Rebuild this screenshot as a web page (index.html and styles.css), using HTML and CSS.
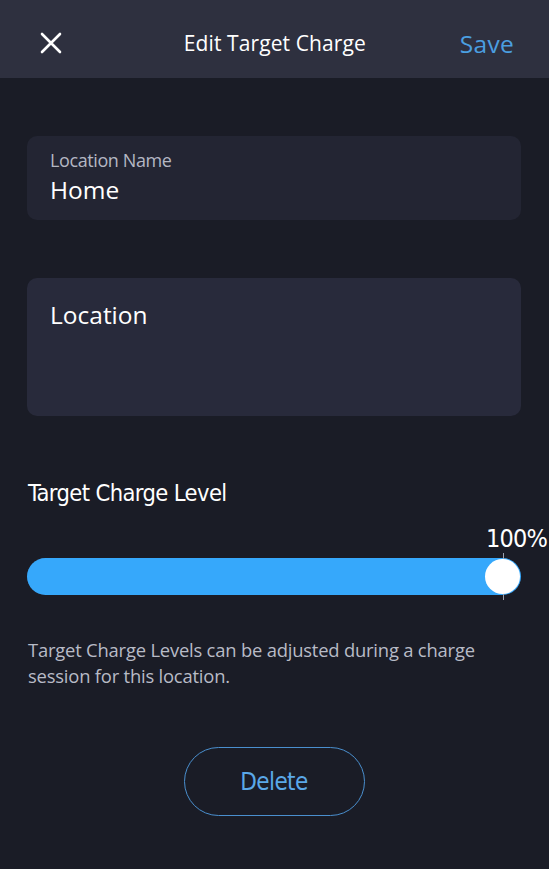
FILE: index.html
```html
<!DOCTYPE html>
<html lang="en">
<head>
  <meta charset="UTF-8">
  <meta name="viewport" content="width=device-width, initial-scale=1.0">
  <title>Edit Target Charge</title>
  <link rel="stylesheet" href="styles.css">
</head>
<body>

<header class="topbar">
  <button class="close-btn" aria-label="Close">
    <svg width="22" height="22" viewBox="0 0 22 22">
      <path d="M2 2 L20 20 M20 2 L2 20" stroke="#fff" stroke-width="2.6" stroke-linecap="round"/>
    </svg>
  </button>
  <div class="title">Edit Target Charge</div>
  <button class="save-btn">Save</button>
</header>

<main class="content">
  <div class="field">
    <div class="field-label">Location Name</div>
    <div class="field-value">Home</div>
  </div>

  <div class="field field-location">
    <div class="field-value">Location</div>
  </div>

  <h2 class="section-title">Target Charge Level</h2>

  <div class="slider">
    <div class="slider-value">100%</div>
    <div class="track">
      <div class="fill" style="width: 100%;"></div>
      <div class="tick"></div>
      <div class="knob"></div>
    </div>
  </div>

  <p class="hint">Target Charge Levels can be adjusted during a charge session for this location.</p>

  <div class="actions">
    <button class="delete-btn">Delete</button>
  </div>
</main>

</body>
</html>
```

FILE: styles.css
```css
body {
  margin: 0;
  padding: 0;
  background-color: #1a1c26;
  font-family: 'Open Sans', 'Noto Sans', sans-serif;
  color: #fff;
}

button {
  background: none;
  border: none;
  font-family: inherit;
  cursor: pointer;
  padding: 0;
}

.topbar {
  height: 70px;
  padding: 8px 35px 0 40px;
  background-color: #2e303f;
  display: flex;
  align-items: center;
  justify-content: space-between;
}

.close-btn {
  width: 22px;
  height: 22px;
  display: flex;
}

.title {
  font-size: 21px;
  color: #fff;
  letter-spacing: 0.1px;
  margin-left: 28px;
}

.save-btn {
  font-size: 24.5px;
  color: #4b9fe1;
  letter-spacing: 0.3px;
}

.content {
  padding: 58px 28px 0 27px;
}

.field {
  background-color: #232533;
  border-radius: 10px;
  padding: 13px 23px 14px;
  height: 57px;
}

.field-label {
  font-size: 18px;
  color: #b4b7c3;
  letter-spacing: -0.4px;
  line-height: 23px;
}

.field-value {
  font-size: 24.5px;
  line-height: 36px;
  color: #fff;
}

.field-location {
  margin-top: 58px;
  background-color: #282a3b;
  height: 108px;
  padding-top: 19px;
  padding-bottom: 11px;
}

.section-title {
  margin: 62px 0 0 1px;
  font-family: 'DejaVu Sans Condensed', 'DejaVu Sans', sans-serif;
  font-stretch: condensed;
  font-weight: normal;
  font-size: 23.5px;
  line-height: 30px;
  letter-spacing: -0.6px;
}

.slider {
  margin-top: 18px;
}

.slider-value {
  text-align: right;
  font-family: 'DejaVu Sans Condensed', 'DejaVu Sans', sans-serif;
  font-size: 25px;
  line-height: 26px;
  margin-right: -26px;
  letter-spacing: -0.8px;
}

.track {
  position: relative;
  height: 37px;
  border-radius: 19px;
  background-color: #2e303f;
  margin-top: 6px;
}

.fill {
  height: 100%;
  border-radius: 19px;
  background-color: #36a8fb;
}

.tick {
  position: absolute;
  right: 17px;
  top: -5px;
  bottom: -5px;
  width: 1px;
  background-color: #9aa0ad;
}

.knob {
  position: absolute;
  right: 1px;
  top: 1px;
  width: 35px;
  height: 35px;
  border-radius: 50%;
  background-color: #fff;
}

.hint {
  margin: 42px 0 0 1px;
  font-size: 18.4px;
  line-height: 26px;
  color: #b8bbc6;
  letter-spacing: -0.2px;
}

.actions {
  display: flex;
  justify-content: center;
  margin-top: 58px;
}

.delete-btn {
  width: 181px;
  height: 69px;
  border: 1.5px solid #4a8fce;
  border-radius: 35px;
  color: #5aa8e8;
  font-family: 'DejaVu Sans Condensed', 'DejaVu Sans', sans-serif;
  font-size: 24px;
  letter-spacing: -0.6px;
}
```
